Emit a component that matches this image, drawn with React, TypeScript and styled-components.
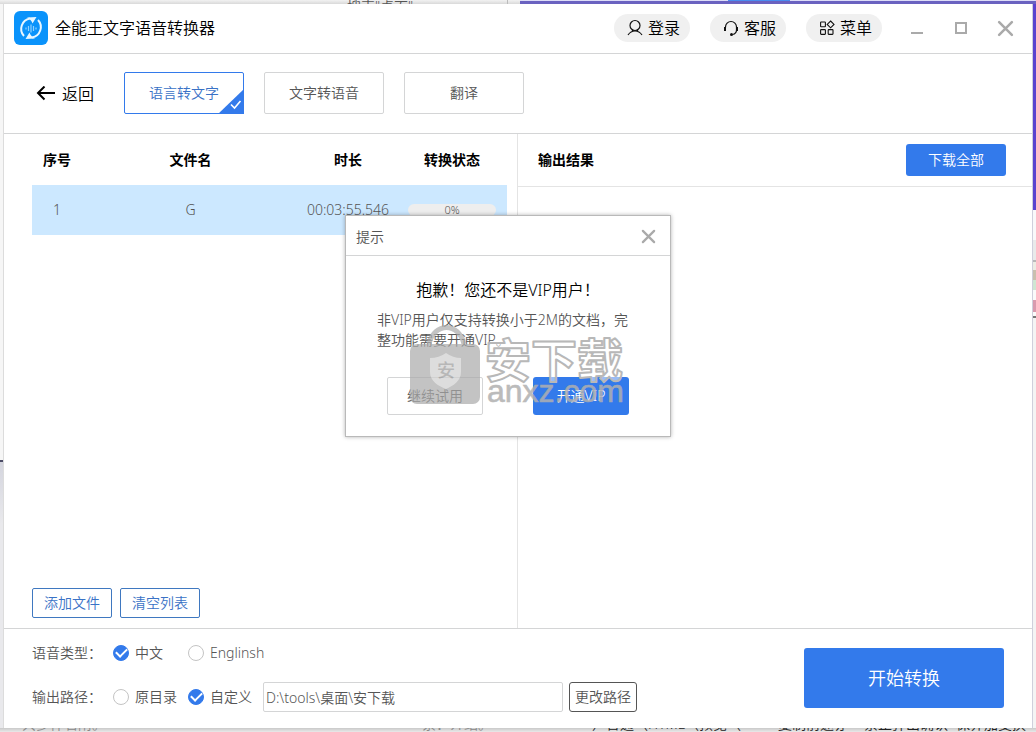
import React from 'react';
import styled, { createGlobalStyle, css } from 'styled-components';

const blue = '#337aeb';
const line = '#d4d5d6';
const textGrey = '#555';

const Global = createGlobalStyle`
  * { box-sizing: border-box; }
  html, body, #root { height: 100%; }
  body {
    margin: 0;
    overflow: hidden;
    font-family: 'Noto Sans', 'Noto Sans CJK SC', sans-serif;
    font-size: 14px;
    font-weight: 350;
    line-height: 20px;
    color: ${textGrey};
    background: #ececec;
  }
  button, input { font: inherit; color: inherit; margin: 0; }
  button { cursor: pointer; }
`;

const Desktop = styled.div`
  display: grid;
  grid-template: 4px minmax(0, 1fr) 4px / 4px minmax(0, 1fr) 4px;
  min-height: 100vh;
`;

const TopEdge = styled.div`
  grid-column: 1 / -1;
  display: grid;
  grid-template-columns: 347px 161px 12px 1fr;
  overflow: hidden;
  background: linear-gradient(#f2f2f2, #d9d9d9);
`;

const SearchHint = styled.div`
  grid-column: 2;
  height: 4px;
  line-height: 14px;
  color: #555;
  border-right: 1px solid #bbb;
`;

const PurpleEdge = styled.div`
  grid-column: 4;
  background: linear-gradient(90deg, transparent 208px, #4a8cf0 208px 270px, transparent 270px) 0 0 / 100% 1px no-repeat,
    linear-gradient(#dcdcf8 1px, #6a62c0 1px);
`;

const LeftEdge = styled.div`
  background: linear-gradient(#f6f6f6 456px, #4c4c66 456px 458px, #d4d5de 458px, #e9e9ec 520px);
  border-right: 1px solid #dcdcdc;
`;

const RightEdge = styled.div`
  background: linear-gradient(
    #5a43cf 206px, #f9f9fa 206px 236px, #e9eaea 236px 256px, #b8b8b8 256px 258px, #ecece4 258px 266px,
    #c9bfae 266px 276px, #cfe6d2 276px 286px, #fafafa 286px 296px, #d99aae 296px 308px, #fafafa 308px 312px,
    #777 312px 314px, #f4f4f4 314px
  );
  border-left: 1px solid #cfcfdc;
`;

const BottomEdge = styled.div`
  grid-column: 1 / -1;
  display: flex;
  height: 4px;
  overflow: hidden;
  background: linear-gradient(#c9c9c9, #e9e9e9);
  line-height: 16px;
`;

const EdgeText = styled.span<{ $w: number; $dark?: boolean }>`
  display: flex;
  align-items: flex-end;
  flex: 0 0 ${p => p.$w}px;
  height: 4px;
  overflow: hidden;
  white-space: nowrap;
  color: ${p => (p.$dark ? '#222' : '#888')};
`;

const Window = styled.main`
  position: relative;
  display: flex;
  flex-direction: column;
  min-width: 0;
  background: #fff;
`;

const TitleBar = styled.header`
  display: flex;
  align-items: center;
  height: 50px;
  padding: 0 18px 1px 10px;
  border-bottom: 1px solid ${line};
`;

const AppTitle = styled.h1`
  flex: 1;
  margin: 0 0 0 7px;
  font-size: 16px;
  font-weight: inherit;
  line-height: 24px;
  color: #000;
`;

const PillRow = styled.div`
  display: flex;
  gap: 20px;
  margin-right: 27px;
`;

const Pill = styled.button`
  display: flex;
  align-items: center;
  justify-content: center;
  gap: 5px;
  width: 76px;
  height: 28px;
  padding: 0 0 0 3px;
  border: 0;
  border-radius: 14px;
  background: #f0f0f0;
  color: #000;
  font-size: 16px;
`;

const WindowButtons = styled.div`
  display: flex;
  gap: 28px;
`;

const PlainButton = styled.button`
  display: flex;
  padding: 0;
  border: 0;
  background: none;
`;

const NavBar = styled.nav`
  display: flex;
  align-items: center;
  height: 80px;
  padding: 0 32px 2px;
  border-bottom: 1px solid ${line};
`;

const BackLink = styled.a`
  display: flex;
  align-items: center;
  gap: 6px;
  width: 88px;
  padding-top: 2px;
  color: #000;
  font-size: 16px;
  text-decoration: none;
`;

const Tabs = styled.div`
  display: flex;
  gap: 20px;
`;

const Tab = styled.button<{ $active?: boolean }>`
  position: relative;
  width: 120px;
  height: 42px;
  padding: 0;
  border: 1px solid ${p => (p.$active ? blue : line)};
  border-radius: 2px;
  background: #fff;
  color: ${p => (p.$active ? '#3a72c6' : textGrey)};
`;

const TabCorner = styled.svg`
  position: absolute;
  right: -1px;
  bottom: -1px;
`;

const Panels = styled.div`
  flex: 1;
  display: grid;
  grid-template-columns: 1fr 1fr;
  border-bottom: 1px solid ${line};
`;

const FilePanel = styled.section`
  display: flex;
  flex-direction: column;
  justify-content: space-between;
  padding: 0 10px 10px 28px;
  border-right: 1px solid #e4e4e4;
`;

const FileTable = styled.table`
  width: 100%;
  table-layout: fixed;
  border-collapse: collapse;
  text-align: center;
  th { height: 51px; padding: 0; color: #000; font-weight: 700; }
  td { height: 50px; padding: 0; background: #cce8ff; }
`;

const Col = styled.col<{ $w?: number }>`
  ${p => p.$w && css`width: ${p.$w}px;`}
`;

const Progress = styled.div`
  height: 12px;
  margin: 0 11px;
  border-radius: 6px;
  background: #eee;
  font-size: 11px;
  line-height: 12px;
`;

const ButtonRow = styled.div`
  display: flex;
  gap: 8px;
`;

const OutlineButton = styled.button`
  width: 80px;
  height: 30px;
  padding: 0;
  border: 1px solid #3f78c0;
  border-radius: 2px;
  background: #fff;
  color: #3a72c6;
`;

const ResultHeader = styled.div`
  display: flex;
  align-items: center;
  justify-content: space-between;
  height: 53px;
  padding: 0 26px 0 20px;
  border-bottom: 1px solid #e4e4e4;
`;

const ResultTitle = styled.h2`
  margin: 0;
  font-size: 14px;
  font-weight: 700;
  color: #000;
`;

const PrimaryButton = styled.button<{ $w: number; $h: number; $size?: number }>`
  width: ${p => p.$w}px;
  height: ${p => p.$h}px;
  padding: 0;
  border: 0;
  border-radius: 3px;
  background: ${blue};
  color: #fff;
  font-size: ${p => p.$size ?? 14}px;
`;

const Footer = styled.footer`
  display: flex;
  align-items: flex-start;
  justify-content: space-between;
  height: 99px;
  padding: 0 28px;
`;

const Settings = styled.div`
  display: grid;
  gap: 14px;
  padding-top: 9px;
`;

const StartArea = styled.div`
  padding-top: 19px;
`;

const SettingRow = styled.div`
  display: flex;
  align-items: center;
  height: 30px;
`;

const SettingLabel = styled.span`
  width: 81px;
`;

const Choice = styled.label`
  display: flex;
  align-items: center;
  gap: 6px;
  width: 75px;
  white-space: nowrap;
`;

const Radio = styled.input`
  flex: none;
  appearance: none;
  display: grid;
  place-items: center;
  width: 16px;
  height: 16px;
  border: 1px solid #c4c4c4;
  border-radius: 50%;
  background: #fff;
  &:checked { border-color: ${blue}; background: ${blue}; }
  &:checked::after {
    content: '';
    width: 9px;
    height: 5px;
    margin-bottom: 3px;
    border: solid #fff;
    border-width: 0 0 2px 2px;
    transform: rotate(-45deg);
  }
`;

const PathInput = styled.input`
  width: 300px;
  height: 30px;
  padding: 0 2px;
  border: 1px solid ${line};
  border-radius: 2px;
  background: #fff;
`;

const PathButton = styled.button`
  width: 68px;
  height: 30px;
  margin-left: 6px;
  padding: 0;
  border: 1px solid #555;
  border-radius: 3px;
  background: #fff;
  white-space: nowrap;
`;

const Dialog = styled.div`
  position: absolute;
  top: 211px;
  left: calc(50% - 173px);
  width: 326px;
  border: 1px solid #b9b9b9;
  background: #fff;
  box-shadow: 0 0 4px rgba(0, 0, 0, 0.3);
`;

const DialogHeader = styled.div`
  display: flex;
  align-items: center;
  justify-content: space-between;
  height: 40px;
  padding: 2px 14px 0 10px;
  border-bottom: 1px solid ${line};
`;

const DialogBody = styled.div`
  padding: 22px 31px 21px;
`;

const DialogTitle = styled.h2`
  margin: 0 0 8px;
  font-size: 16px;
  font-weight: inherit;
  line-height: 24px;
  text-align: center;
  color: #000;
`;

const DialogText = styled.p`
  margin: 0 0 27px;
`;

const DialogActions = styled.div`
  display: flex;
  justify-content: space-between;
  padding: 0 10px;
`;

const TrialButton = styled.button`
  width: 96px;
  height: 38px;
  padding: 0;
  border: 1px solid ${line};
  border-radius: 2px;
  background: #fff;
`;

const Watermark = styled.svg`
  position: absolute;
  left: 64px;
  top: 104px;
  pointer-events: none;
`;

const CloseIcon = ({ size }: { size: number }) => (
  <svg width={size} height={size} viewBox="0 0 16 16" stroke="#aaa" strokeWidth="2.4" strokeLinecap="round">
    <path d="M2 2L14 14M14 2L2 14" />
  </svg>
);

const Logo = () => (
  <svg width="34" height="34" viewBox="0 0 34 34" fill="none">
    <rect width="34" height="34" rx="6" fill="#0a93fb" />
    <path d="M10 25A10.500 10.500 0 0 1 16 7.500" stroke="#e8f6ff" strokeWidth="2" />
    <path d="M24 9A10.500 10.500 0 0 1 18 26.500" stroke="#e8f6ff" strokeWidth="2" />
    <path d="M13 6.500L22.500 6L18.500 12.500Q17.500 9 13 6.500Z" fill="#e8f6ff" />
    <path d="M21 27.500L11.500 28L15.500 21.500Q16.500 25 21 27.500Z" fill="#e8f6ff" />
    <path d="M12 16.500v2M14.500 15v5M17 13.500v8M19.500 15v5M22 16.500v2" stroke="#8fd0ff" strokeWidth="1.200" />
  </svg>
);

const UserIcon = () => (
  <svg width="16" height="18" viewBox="0 0 16 18" fill="none" stroke="#111" strokeWidth="1.2">
    <circle cx="8" cy="6.500" r="5" />
    <path d="M1 16C3 13 5 12 8 12s5 1 7 4M5 11l1.500 1.200M11 11l-1.500 1.200" />
  </svg>
);

const HeadsetIcon = () => (
  <svg width="16" height="18" viewBox="0 0 16 18" fill="none" stroke="#111">
    <path d="M2.500 8.500V8a5.500 5.500 0 0 1 11 0v3c0 2.500-1.500 4-4 4.500" strokeWidth="1.200" />
    <path d="M2 8v4M14 8v4" strokeWidth="2" />
    <circle cx="8.500" cy="15.500" r="1.500" fill="#111" stroke="none" />
  </svg>
);

const MenuIcon = () => (
  <svg width="16" height="16" viewBox="0 0 16 16" fill="none" stroke="#111" strokeWidth="1.1">
    <rect x="1.600" y="2" width="4.800" height="4.800" rx="0.600" />
    <rect x="1.600" y="9.600" width="4.800" height="4.800" rx="0.600" />
    <rect x="9.200" y="9.600" width="4.800" height="4.800" rx="0.600" />
    <path d="M11.600 1L15 4.400L11.600 7.800L8.200 4.400Z" />
  </svg>
);

const BackIcon = () => (
  <svg width="20" height="16" viewBox="0 0 20 16" fill="none" stroke="#000" strokeWidth="2">
    <path d="M19 7H2.500M8.500 0.500L2 7l6.500 6.500" />
  </svg>
);

export default function App() {
  return (
    <>
      <Global />
      <Desktop>
        <TopEdge>
          <SearchHint>搜索"桌面"</SearchHint>
          <PurpleEdge />
        </TopEdge>
        <LeftEdge />
        <Window>
          <TitleBar>
            <Logo />
            <AppTitle>全能王文字语音转换器</AppTitle>
            <PillRow>
              <Pill><UserIcon />登录</Pill>
              <Pill><HeadsetIcon />客服</Pill>
              <Pill><MenuIcon />菜单</Pill>
            </PillRow>
            <WindowButtons>
              <PlainButton aria-label="最小化">
                <svg width="16" height="16" viewBox="0 0 16 16"><path d="M2 13H14" stroke="#aaa" strokeWidth="2" /></svg>
              </PlainButton>
              <PlainButton aria-label="最大化">
                <svg width="16" height="16" viewBox="0 0 16 16"><rect x="3" y="3" width="10" height="10" fill="none" stroke="#aaa" strokeWidth="2" /></svg>
              </PlainButton>
              <PlainButton aria-label="关闭"><CloseIcon size={17} /></PlainButton>
            </WindowButtons>
          </TitleBar>

          <NavBar>
            <BackLink href="#"><BackIcon />返回</BackLink>
            <Tabs>
              <Tab $active>
                语言转文字
                <TabCorner width="26" height="25" viewBox="0 0 26 25">
                  <path d="M26 0V25H0Z" fill={blue} />
                  <path d="M13 15.500L16.500 19L22.500 12" fill="none" stroke="#fff" strokeWidth="1.600" />
                </TabCorner>
              </Tab>
              <Tab>文字转语音</Tab>
              <Tab>翻译</Tab>
            </Tabs>
          </NavBar>

          <Panels>
            <FilePanel>
              <FileTable>
                <colgroup>
                  <Col $w={50} />
                  <Col />
                  <Col $w={98} />
                  <Col $w={110} />
                </colgroup>
                <thead>
                  <tr><th>序号</th><th>文件名</th><th>时长</th><th>转换状态</th></tr>
                </thead>
                <tbody>
                  <tr><td>1</td><td>G</td><td>00:03:55.546</td><td><Progress>0%</Progress></td></tr>
                </tbody>
              </FileTable>
              <ButtonRow>
                <OutlineButton>添加文件</OutlineButton>
                <OutlineButton>清空列表</OutlineButton>
              </ButtonRow>
            </FilePanel>
            <section>
              <ResultHeader>
                <ResultTitle>输出结果</ResultTitle>
                <PrimaryButton $w={100} $h={32}>下载全部</PrimaryButton>
              </ResultHeader>
            </section>
          </Panels>

          <Footer>
            <Settings>
              <SettingRow>
                <SettingLabel>语音类型：</SettingLabel>
                <Choice><Radio type="radio" name="language" defaultChecked />中文</Choice>
                <Choice><Radio type="radio" name="language" />Englinsh</Choice>
              </SettingRow>
              <SettingRow>
                <SettingLabel>输出路径：</SettingLabel>
                <Choice><Radio type="radio" name="target" />原目录</Choice>
                <Choice><Radio type="radio" name="target" defaultChecked />自定义</Choice>
                <PathInput aria-label="输出路径" defaultValue="D:\tools\桌面\安下载" />
                <PathButton>更改路径</PathButton>
              </SettingRow>
            </Settings>
            <StartArea>
              <PrimaryButton $w={200} $h={60} $size={18}>开始转换</PrimaryButton>
            </StartArea>
          </Footer>

          <Dialog role="dialog" aria-labelledby="vip-title">
            <DialogHeader>
              提示
              <PlainButton aria-label="关闭提示"><CloseIcon size={15} /></PlainButton>
            </DialogHeader>
            <DialogBody>
              <DialogTitle id="vip-title">抱歉！您还不是VIP用户！</DialogTitle>
              <DialogText>非VIP用户仅支持转换小于2M的文档，完整功能需要开通VIP。</DialogText>
              <DialogActions>
                <TrialButton>继续试用</TrialButton>
                <PrimaryButton $w={96} $h={38}>开通VIP</PrimaryButton>
              </DialogActions>
            </DialogBody>
            <Watermark width="220" height="90" viewBox="0 0 220 90">
              <g opacity="0.7">
                <path d="M19 24C24 2 49 2 54 24" fill="none" stroke="#aaa" strokeWidth="5" />
                <rect x="0" y="24" width="70" height="60" rx="7" fill="#aaa" />
                <path d="M36 33Q43 38 51 38V52C51 61 43 66 36 69C28 66 20 61 20 52V38Q29 38 36 33Z" fill="#d0d0d0" />
                <text x="36" y="57" textAnchor="middle" fontSize="18" fontWeight="500" fill="#999">安</text>
              </g>
              <text x="75" y="57" fontSize="46" fontWeight="700" fill="#fff" fillOpacity="0.5" stroke="#b8b8b8" strokeWidth="2" strokeLinejoin="round">安下载</text>
              <text x="77" y="82" fontFamily="Liberation Sans" fontSize="32" fill="#b0b0b0" stroke="#b0b0b0" strokeWidth="0.6" opacity="0.85">anxz.com</text>
            </Watermark>
          </Dialog>
        </Window>
        <RightEdge />
        <BottomEdge>
          <EdgeText $w={22} />
          <EdgeText $w={400}>共多件名附。</EdgeText>
          <EdgeText $w={170}>索：介绍。</EdgeText>
          <EdgeText $w={186} $dark>）普通（HTML（预览（</EdgeText>
          <EdgeText $w={86} $dark>复制前速亦</EdgeText>
          <EdgeText $w={92} $dark>禁止弹出确认</EdgeText>
          <EdgeText $w={80} $dark>保养加变换</EdgeText>
        </BottomEdge>
      </Desktop>
    </>
  );
}
